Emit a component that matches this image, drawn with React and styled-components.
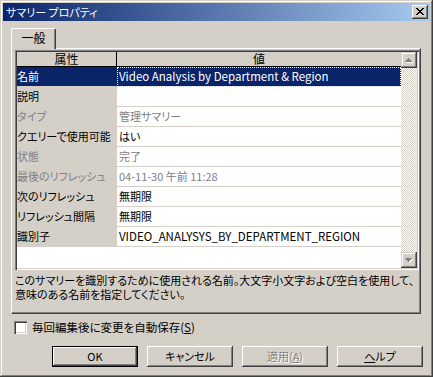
import React from 'react';
import styled, { createGlobalStyle, css } from 'styled-components';

const FACE = '#D4D0C8';
const DARK = '#808080';
const DARKER = '#404040';
const NAVY = '#0A246A';
const FONT = '"Noto Sans CJK JP", "Noto Sans", sans-serif';

const Global = createGlobalStyle`
  html, body { margin: 0; padding: 0; background: ${FACE}; }
  body {
    font-family: ${FONT};
    font-size: 11px;
    font-feature-settings: "palt";
    color: #000;
  }
  * { box-sizing: border-box; }
`;

const Window = styled.div`
  width: 433px;
  height: 377px;
  background: ${FACE};
  padding: 3px;
  display: flex;
  flex-direction: column;
  box-shadow: inset -1px -1px ${DARKER}, inset 1px 1px ${FACE},
    inset -2px -2px ${DARK}, inset 2px 2px #fff;
`;

const TitleBar = styled.div`
  height: 18px;
  flex: none;
  display: flex;
  align-items: center;
  justify-content: space-between;
  padding: 0 2px 0 3px;
  background: linear-gradient(to right, ${NAVY}, #A6CAF0);
  color: #fff;
  line-height: 18px;
`;

const TitleText = styled.span`
  font-size: 11px;
`;

const CloseButton = styled.div`
  width: 16px;
  height: 14px;
  background: ${FACE};
  display: flex;
  align-items: center;
  justify-content: center;
  box-shadow: inset -1px -1px ${DARKER}, inset 1px 1px #fff,
    inset -2px -2px ${DARK}, inset 2px 2px ${FACE};
  padding-bottom: 1px;
`;

const Body = styled.div`
  flex: 1;
  display: flex;
  flex-direction: column;
  padding: 7px 9px 0 8px;
`;

const Tab = styled.div`
  position: relative;
  z-index: 1;
  width: 45px;
  height: 21px;
  margin-bottom: -1px;
  background: ${FACE};
  border-top: 1px solid #fff;
  border-left: 1px solid #fff;
  border-right: 1px solid ${DARKER};
  border-radius: 2px 2px 0 0;
  box-shadow: inset -1px 0 ${DARK};
  display: flex;
  justify-content: center;
  padding-top: 2px;
  line-height: 14px;
  font-size: 12px;
`;

const Panel = styled.div`
  height: 266px;
  flex: none;
  border-top: 1px solid #fff;
  border-left: 1px solid #fff;
  border-right: 1px solid ${DARKER};
  border-bottom: 1px solid ${DARKER};
  box-shadow: inset -1px -1px ${DARK};
  padding: 1px 1px 0 3px;
  display: flex;
  flex-direction: column;
`;

const Grid = styled.div`
  height: 220px;
  flex: none;
  padding: 2px;
  display: flex;
  background: #fff;
  box-shadow: inset 1px 1px ${DARK}, inset 2px 2px ${DARKER},
    inset -1px -1px #fff, inset -2px -2px ${FACE};
`;

const Table = styled.div`
  flex: 1;
  display: flex;
  flex-direction: column;
  background: #fff;
`;

const HeaderRow = styled.div`
  display: grid;
  grid-template-columns: 100px 1fr;
  height: 15px;
  background: ${FACE};
  border-bottom: 1px solid #000;
  line-height: 14px;
  font-size: 12px;
`;

const HeaderCell = styled.div`
  text-align: center;
  ${(p) => p.$divider && css`border-right: 1px solid #000;`}
`;

const Row = styled.div`
  display: grid;
  grid-template-columns: 100px 1fr;
  height: 20px;
  line-height: 19px;
`;

const AttrCell = styled.div`
  background: ${(p) => (p.$selected ? NAVY : FACE)};
  color: ${(p) => (p.$selected ? '#fff' : p.$disabled ? DARK : '#000')};
  border-bottom: 1px solid ${FACE};
  white-space: nowrap;
  overflow: hidden;
`;

const ValueCell = styled.div`
  background: ${(p) => (p.$selected ? NAVY : '#fff')};
  color: ${(p) => (p.$selected ? '#fff' : p.$disabled ? DARK : '#000')};
  border-bottom: 1px solid ${FACE};
  padding-left: 2px;
  white-space: nowrap;
  overflow: hidden;
  ${(p) => p.$latin && css`font-size: 11.5px;`}
  ${(p) =>
    p.$selected &&
    css`
      outline: 1px dotted #fff;
      outline-offset: -1px;
    `}
`;

const ScrollBar = styled.div`
  width: 16px;
  flex: none;
  display: flex;
  flex-direction: column;
`;

const ScrollButton = styled.div`
  width: 16px;
  height: 16px;
  flex: none;
  background: ${FACE};
  display: flex;
  align-items: center;
  justify-content: center;
  box-shadow: inset -1px -1px ${DARKER}, inset 1px 1px ${FACE},
    inset -2px -2px ${DARK}, inset 2px 2px #fff;
`;

const ScrollTrack = styled.div`
  flex: 1;
  background: repeating-conic-gradient(${FACE} 0 25%, #fff 0 50%) 0 0 / 2px 2px;
`;

const Description = styled.div`
  margin-top: 3px;
  line-height: 14px;
  white-space: nowrap;
`;

const CheckRow = styled.label`
  display: flex;
  align-items: center;
  gap: 5px;
  margin: 7px 0 0 3px;
  height: 13px;
  line-height: 13px;
  font-size: 11.5px;
`;

const CheckBox = styled.span`
  width: 13px;
  height: 13px;
  background: #fff;
  box-shadow: inset 1px 1px ${DARK}, inset 2px 2px ${DARKER},
    inset -1px -1px #fff, inset -2px -2px ${FACE};
`;

const Mnemonic = styled.span`
  text-decoration: underline;
  text-underline-offset: 1px;
`;

const ButtonRow = styled.div`
  display: flex;
  justify-content: flex-end;
  gap: 9px;
  margin: 12px -2px 0 0;
`;

const Button = styled.button`
  width: 86px;
  height: 21px;
  padding: 0;
  margin: 0;
  font-family: ${FONT};
  font-size: 11px;
  font-feature-settings: "palt";
  line-height: 19px;
  background: ${FACE};
  color: ${(p) => (p.$disabled ? DARK : '#000')};
  text-shadow: ${(p) => (p.$disabled ? '1px 1px #fff' : 'none')};
  border: none;
  box-shadow: inset -1px -1px ${DARKER}, inset 1px 1px #fff,
    inset -2px -2px ${DARK}, inset 2px 2px ${FACE};
  ${(p) =>
    p.$default &&
    css`
      border: 1px solid #000;
    `}
`;

const CloseIcon = () => (
  <svg width="8" height="7" viewBox="0 0 8 7" shapeRendering="crispEdges">
    <path
      fill="#000"
      d="M0 0h2v1H0zM6 0h2v1H6zM1 1h2v1H1zM5 1h2v1H5zM2 2h4v1H2zM3 3h2v1H3zM2 4h4v1H2zM1 5h2v1H1zM5 5h2v1H5zM0 6h2v1H0zM6 6h2v1H6z"
    />
  </svg>
);

const Arrow = ({ down }) => (
  <svg width="8" height="6" viewBox="0 0 8 6" shapeRendering="crispEdges">
    {down ? (
      <>
        <path fill="#fff" d="M1 2h7v1H1zM2 3h5v1H2zM3 4h3v1H3zM4 5h1v1H4z" />
        <path fill={DARK} d="M0 1h7v1H0zM1 2h5v1H1zM2 3h3v1H2zM3 4h1v1H3z" />
      </>
    ) : (
      <>
        <path fill="#fff" d="M4 2h1v1H4zM3 3h3v1H3zM2 4h5v1H2zM1 5h7v1H1z" />
        <path fill={DARK} d="M3 1h1v1H3zM2 2h3v1H2zM1 3h5v1H1zM0 4h7v1H0z" />
      </>
    )}
  </svg>
);

const rows = [
  { name: '名前', value: 'Video Analysis by Department & Region', selected: true, latin: true },
  { name: '説明', value: '' },
  { name: 'タイプ', value: '管理サマリー', disabled: true },
  { name: 'クエリーで使用可能', value: 'はい' },
  { name: '状態', value: '完了', disabled: true },
  { name: '最後のリフレッシュ', value: '04-11-30 午前 11:28', disabled: true },
  { name: '次のリフレッシュ', value: '無期限' },
  { name: 'リフレッシュ間隔', value: '無期限' },
  { name: '識別子', value: 'VIDEO_ANALYSYS_BY_DEPARTMENT_REGION', latin: true },
];

export default function App() {
  return (
    <>
      <Global />
      <Window>
        <TitleBar>
          <TitleText>サマリー プロパティ</TitleText>
          <CloseButton>
            <CloseIcon />
          </CloseButton>
        </TitleBar>
        <Body>
          <Tab>一般</Tab>
          <Panel>
            <Grid>
              <Table>
                <HeaderRow>
                  <HeaderCell $divider>属性</HeaderCell>
                  <HeaderCell>値</HeaderCell>
                </HeaderRow>
                {rows.map((r) => (
                  <Row key={r.name}>
                    <AttrCell $selected={r.selected} $disabled={r.disabled}>
                      {r.name}
                    </AttrCell>
                    <ValueCell
                      $selected={r.selected}
                      $disabled={r.disabled}
                      $latin={r.latin}
                    >
                      {r.value}
                    </ValueCell>
                  </Row>
                ))}
              </Table>
              <ScrollBar>
                <ScrollButton>
                  <Arrow />
                </ScrollButton>
                <ScrollTrack />
                <ScrollButton>
                  <Arrow down />
                </ScrollButton>
              </ScrollBar>
            </Grid>
            <Description>
              このサマリーを識別するために使用される名前。大文字小文字および空白を使用して、
              <br />
              意味のある名前を指定してください。
            </Description>
          </Panel>
          <CheckRow>
            <CheckBox />
            <span>
              毎回編集後に変更を自動保存(<Mnemonic>S</Mnemonic>)
            </span>
          </CheckRow>
          <ButtonRow>
            <Button $default>OK</Button>
            <Button>キャンセル</Button>
            <Button $disabled>
              適用(<Mnemonic>A</Mnemonic>)
            </Button>
            <Button>
              <Mnemonic>ヘ</Mnemonic>ルプ
            </Button>
          </ButtonRow>
        </Body>
      </Window>
    </>
  );
}
